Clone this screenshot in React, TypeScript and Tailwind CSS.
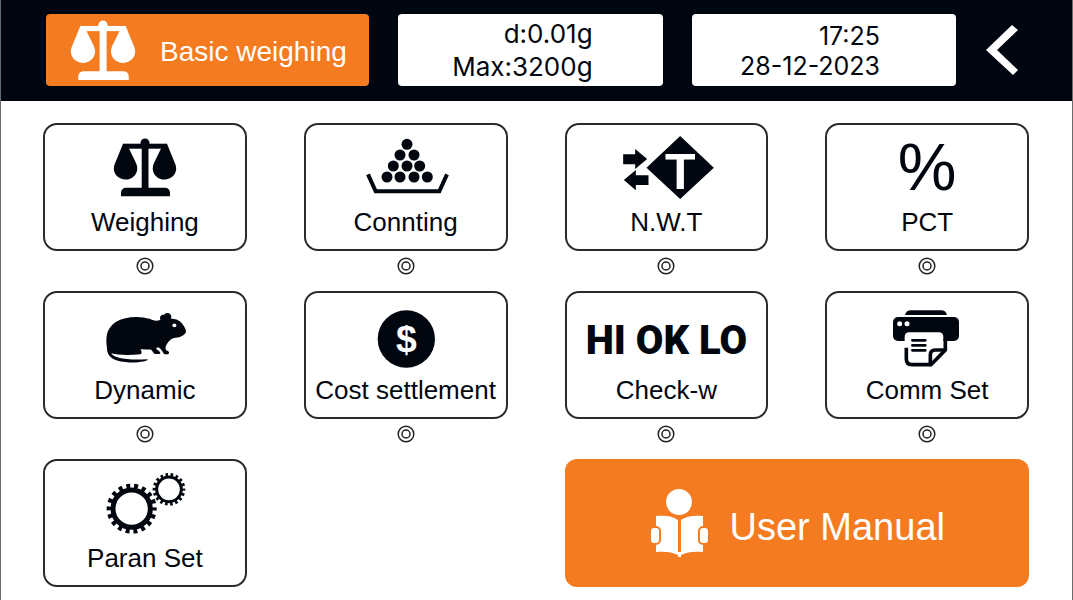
import type { ReactNode } from 'react';

function ScaleIcon({ className }: { className?: string }) {
  return (
    <svg viewBox="30 1 64 59" className={className} fill="currentColor" aria-hidden="true">
      <circle cx="62" cy="6" r="4.5" />
      <rect x="40" y="6.7" width="44" height="5" />
      <rect x="58.7" y="6" width="6.8" height="47" />
      <path d="M38 59.2v-3c0-3.5 2-5.5 5.500-5.500h38c3.500 0 5.500 2 5.500 5.500v3z" />
      <path d="M40 6.700 32.200 26C28 34.500 34 42.500 42.500 42.500S57 34.500 53 26L45.500 10.500z" />
      <path d="M84 6.700 91.800 26c4.200 8.500-1.800 16.500-10.300 16.500S67 34.500 71 26l7.500-15.500z" />
    </svg>
  );
}

function CountingIcon() {
  const dots = [
    [335, 88],
    [314, 120], [356, 120],
    [294, 153], [335, 153], [373, 153],
    [275, 186], [314, 186], [356, 186], [396, 186],
  ];
  return (
    <svg viewBox="206 60 252 192" className="h-16 w-[84px] overflow-visible" fill="currentColor" aria-hidden="true">
      {dots.map(([cx, cy]) => (
        <circle key={`${cx}-${cy}`} cx={cx} cy={cy} r="16.5" />
      ))}
      <path d="M218 178 241 229H432L455 178" fill="none" stroke="currentColor" strokeWidth="12" />
    </svg>
  );
}

function NetWeightIcon() {
  return (
    <svg viewBox="194 58 278 192" className="h-16 w-[93px] overflow-visible" fill="currentColor" aria-hidden="true">
      <path d="M374 61 475 156 374 250 273 156z" />
      <path d="M203 116H239V100L275 130 239 160V146H203z" />
      <path d="M279 179H241V163L205 193 241 224V208H279z" />
      <text x="374" y="220" textAnchor="middle" fontSize="150" fontWeight="700" fill="white">
        T
      </text>
    </svg>
  );
}

function MouseIcon() {
  return (
    <svg viewBox="221 54 247 192" className="h-16 w-[82px] overflow-visible" fill="currentColor" aria-hidden="true">
      <path d="M230 190C226 160 226 132 256 111C285 93 330 92 360 102C372 108 382 108 391 104C387 95 393 87 402 89C405 83 416 82 421 88C425 92 424 97 422 100C435 101 446 104 452 111C460 120 468 130 468 140C464 152 450 157 437 158C425 159 418 165 412 175C405 185 405 192 409 197C418 199 420 207 413 208L402 208C397 199 393 192 388 189C384 187 379 188 378 191C380 196 389 198 391 204C391 208 380 208 374 207C367 203 368 196 360 194C350 194 340 192 331 193C336 200 335 206 331 208C300 211 262 211 243 205C248 218 285 227 352 223C358 227 330 233 305 233C270 232 230 226 230 190z" />
      <circle cx="433" cy="121" r="6" fill="white" />
    </svg>
  );
}

function DollarIcon() {
  return (
    <svg viewBox="236 51 192 192" className="h-16 w-16 overflow-visible" aria-hidden="true">
      <circle cx="333" cy="159" r="86" fill="currentColor" />
      <text x="333" y="199" textAnchor="middle" fontSize="112" fontWeight="700" fill="white">
        $
      </text>
    </svg>
  );
}

function PrinterIcon() {
  return (
    <svg viewBox="231 54 204 192" className="h-16 w-[68px] overflow-visible" fill="currentColor" aria-hidden="true">
      <path d="M267 90C270 80 276 76 284 76H376C384 76 390 80 393 90z" />
      <rect x="231" y="96" width="198" height="72" rx="15" />
      <circle cx="251" cy="116" r="7.500" fill="white" />
      <circle cx="273" cy="116" r="7.500" fill="white" />
      <path d="M266 190V156Q266 142 280 142H368Q382 142 382 156V196L345 236H266z" fill="white" />
      <g fill="none" stroke="currentColor" strokeWidth="11">
        <path d="M271 188V222Q271 239 288 239H345L388 195V160" strokeLinejoin="round" />
        <path d="M343 236V210Q343 195 358 195H388" />
        <path d="M289 166H328M289 181H328M289 196H328" strokeWidth="8" strokeLinecap="round" />
      </g>
    </svg>
  );
}

function Gear({ cx, cy, ring, width, teeth }: { cx: number; cy: number; ring: number; width: number; teeth: number }) {
  return (
    <g>
      <circle cx={cx} cy={cy} r={ring} strokeWidth={width} />
      <circle cx={cx} cy={cy} r={teeth} strokeWidth="14" pathLength={36} strokeDasharray="1 1" strokeDashoffset="0.5" />
    </g>
  );
}

function GearsIcon() {
  return (
    <svg viewBox="224 60 240 192" className="h-16 w-20 overflow-visible" fill="none" stroke="currentColor" aria-hidden="true">
      <Gear cx={304} cy={173} ring={56} width={15} teeth={68} />
      <Gear cx={416} cy={115} ring={37} width={9} teeth={42} />
    </svg>
  );
}

function ReaderIcon() {
  return (
    <svg viewBox="647 487 61 70" className="h-[70px] w-[61px] shrink-0" fill="currentColor" aria-hidden="true">
      <circle cx="677" cy="501" r="13" />
      <path d="M654 515C663 514 671 515 676 519V554C671 551 662 550 654 551z" />
      <path d="M701 515C692 514 684 515 679 519V554C684 551 693 550 701 551z" />
      <path d="M676 551H679V556H676z" />
      <rect x="648" y="526" width="10" height="17" rx="4" stroke="#f47b20" strokeWidth="2" />
      <rect x="697" y="526" width="10" height="17" rx="4" stroke="#f47b20" strokeWidth="2" />
    </svg>
  );
}

function Ring() {
  return (
    <svg viewBox="0 0 18 18" className="h-[18px] w-[18px]" fill="none" stroke="#222222" strokeWidth="1.500" aria-hidden="true">
      <circle cx="9" cy="9" r="7.800" />
      <circle cx="9" cy="9" r="4" />
    </svg>
  );
}

const modes: { label: string; icon: ReactNode; ring?: boolean }[] = [
  { label: 'Weighing', icon: <ScaleIcon className="h-[59px] w-16" />, ring: true },
  { label: 'Connting', icon: <CountingIcon />, ring: true },
  { label: 'N.W.T', icon: <NetWeightIcon />, ring: true },
  { label: 'PCT', icon: <span className="text-[66px] leading-[64px]">%</span>, ring: true },
  { label: 'Dynamic', icon: <MouseIcon />, ring: true },
  { label: 'Cost settlement', icon: <DollarIcon />, ring: true },
  {
    label: 'Check-w',
    icon: <span className="whitespace-nowrap pt-3 font-['Roboto',sans-serif] text-[40px] font-black leading-[64px]">HI OK LO</span>,
    ring: true,
  },
  { label: 'Comm Set', icon: <PrinterIcon />, ring: true },
  { label: 'Paran Set', icon: <GearsIcon /> },
];

function ModeCard({ label, icon, ring }: { label: string; icon: ReactNode; ring?: boolean }) {
  return (
    <div className="flex flex-col items-center gap-1.5">
      <button type="button" className="flex h-32 w-full flex-col items-center rounded-[14px] border-2 border-[#2b2b2b] bg-white pt-2.5">
        <span className="flex h-16 items-center justify-center">{icon}</span>
        <span className="mt-2 whitespace-nowrap text-[26px] leading-[30px]">{label}</span>
      </button>
      {ring && <Ring />}
    </div>
  );
}

function Header() {
  return (
    <header className="grid grid-cols-[324fr_265fr_265fr_33fr] gap-x-[29px] bg-[#00060f] pb-[15px] pl-[45px] pr-[53px] pt-3.5">
      <div className="flex h-[72px] items-center gap-6 rounded bg-[#f47b20] pl-6 text-white">
        <ScaleIcon className="h-[61px] w-[66px] shrink-0" />
        <h1 className="whitespace-nowrap pt-1 text-[28px] leading-8">Basic weighing</h1>
      </div>
      <div className="flex h-[72px] flex-col justify-center rounded bg-white pr-[70px] text-right font-['Inter',sans-serif] text-[26px] leading-[33px]">
        <p>d:0.01g</p>
        <p>Max:3200g</p>
      </div>
      <div className="flex h-[72px] flex-col justify-center rounded bg-white pr-[76px] pt-0.5 text-right font-['Inter',sans-serif] text-[25px] leading-[30px]">
        <p>17:25</p>
        <p>28-12-2023</p>
      </div>
      <button type="button" aria-label="Back" className="flex items-center justify-center text-white">
        <svg viewBox="0 0 34 50" className="h-[50px] w-[34px] shrink-0" fill="currentColor" aria-hidden="true">
          <path d="M27 0 33 5 12 25 33 45 28 50 1 25z" />
        </svg>
      </button>
    </header>
  );
}

export default function App() {
  return (
    <div className="min-h-screen border-x border-[#6b6b6b] bg-white font-['Liberation_Sans',Arial,sans-serif] text-[#01060f]">
      <Header />
      <main className="grid grid-cols-4 gap-x-[57px] gap-y-4 pb-3 pl-[42px] pr-[43px] pt-[22px]">
        {modes.map((mode) => (
          <ModeCard key={mode.label} {...mode} />
        ))}
        <button type="button" className="col-span-2 col-start-3 flex h-32 items-center justify-center gap-5 rounded-xl bg-[#f47b20] text-white">
          <ReaderIcon />
          <span className="whitespace-nowrap pt-2 text-[38px] leading-10">User Manual</span>
        </button>
      </main>
    </div>
  );
}
